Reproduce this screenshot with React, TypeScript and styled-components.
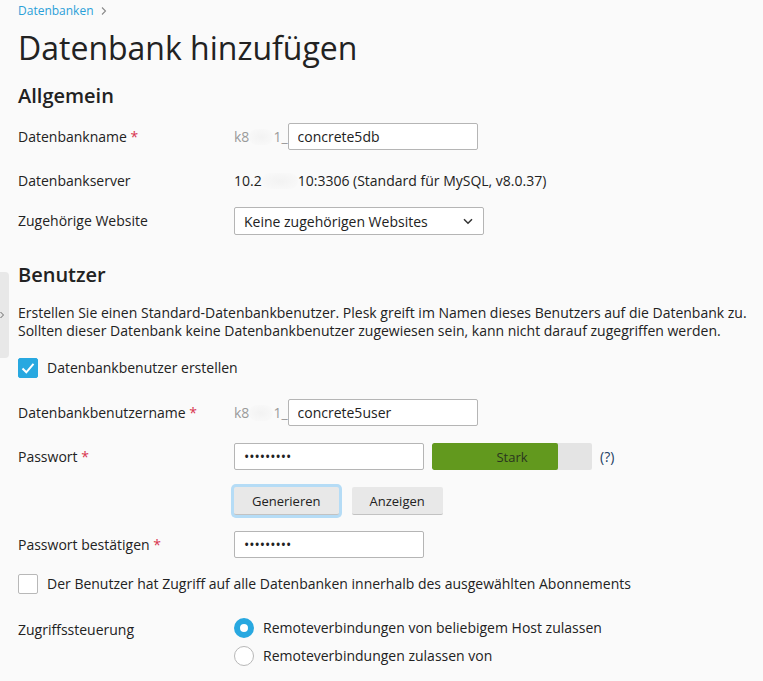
import React from 'react';
import styled, { createGlobalStyle } from 'styled-components';

const GlobalStyle = createGlobalStyle`
  html, body {
    margin: 0;
    padding: 0;
    background: #fafafa;
  }
  body {
    font-family: "Open Sans", "DejaVu Sans", sans-serif;
    font-size: 14px;
    color: #222;
  }
`;

function App() {
  return (
    <>
      <GlobalStyle />
      <SideToggle>
        <svg width="6" height="8" viewBox="0 0 6 8">
          <path d="M1.5 1l3 3-3 3" fill="none" stroke="#666" strokeWidth="1" />
        </svg>
      </SideToggle>
      <Page>
        <Breadcrumb>
          <a>Datenbanken</a>
          <svg width="8" height="10" viewBox="0 0 8 10">
            <path d="M2 1.5l3.5 3.5L2 8.5" fill="none" stroke="#8a8a8a" strokeWidth="1.1" />
          </svg>
        </Breadcrumb>
        <Title>Datenbank hinzufügen</Title>

        <Heading $mt={16}>Allgemein</Heading>

        <Row $mt={15}>
          <Label>Datenbankname <Req>*</Req></Label>
          <Field>
            <Prefix>k8<Blur $w={24} />1_</Prefix>
            <Input $w={190} defaultValue="concrete5db" />
          </Field>
        </Row>

        <Row $mt={21}>
          <Label>Datenbankserver</Label>
          <Field>
            <Value>
              10.2<Blur $w={36} />10:3306 (Standard für MySQL, v8.0.37)
            </Value>
          </Field>
        </Row>

        <Row $mt={16}>
          <Label>Zugehörige Website</Label>
          <Field>
            <Select>
              <span>Keine zugehörigen Websites</span>
              <svg width="10" height="7" viewBox="0 0 10 7">
                <path d="M1 1.2l4 4 4-4" fill="none" stroke="#333" strokeWidth="1.5" />
              </svg>
            </Select>
          </Field>
        </Row>

        <Heading $mt={28}>Benutzer</Heading>

        <Hint>
          <span>Erstellen Sie einen Standard-Datenbankbenutzer. Plesk greift im Namen dieses Benutzers auf die Datenbank zu.</span>
          <span>Sollten dieser Datenbank keine Datenbankbenutzer zugewiesen sein, kann nicht darauf zugegriffen werden.</span>
        </Hint>

        <CheckRow $mt={18}>
          <Box $checked>
            <svg width="14" height="12" viewBox="0 0 14 12">
              <path d="M1.5 6.5l3.8 3.8L12.5 1.8" fill="none" stroke="#fff" strokeWidth="2" />
            </svg>
          </Box>
          Datenbankbenutzer erstellen
        </CheckRow>

        <Row $mt={21}>
          <Label>Datenbankbenutzername <Req>*</Req></Label>
          <Field>
            <Prefix>k8<Blur $w={24} />1_</Prefix>
            <Input $w={190} defaultValue="concrete5user" />
          </Field>
        </Row>

        <Row $mt={17}>
          <Label>Passwort <Req>*</Req></Label>
          <Field>
            <Input $w={190} type="password" defaultValue="123456789" />
            <Strength>
              <StrengthFill style={{ width: '79%' }} />
              <StrengthText>Stark</StrengthText>
            </Strength>
            <HelpLink>(?)</HelpLink>
          </Field>
        </Row>

        <Row $mt={17}>
          <span />
          <Field>
            <Button $focused>Generieren</Button>
            <Button>Anzeigen</Button>
          </Field>
        </Row>

        <Row $mt={16}>
          <Label>Passwort bestätigen <Req>*</Req></Label>
          <Field>
            <Input $w={190} type="password" defaultValue="123456789" />
          </Field>
        </Row>

        <CheckRow $mt={16}>
          <Box />
          Der Benutzer hat Zugriff auf alle Datenbanken innerhalb des ausgewählten Abonnements
        </CheckRow>

        <Row $mt={24} $top>
          <Label $pad={2}>Zugriffssteuerung</Label>
          <Radios>
            <RadioRow>
              <Radio $checked />
              Remoteverbindungen von beliebigem Host zulassen
            </RadioRow>
            <RadioRow>
              <Radio />
              Remoteverbindungen zulassen von
            </RadioRow>
          </Radios>
        </Row>
      </Page>
    </>
  );
}

const Page = styled.div`
  padding: 3px 18px 20px;
`;

const SideToggle = styled.div`
  position: absolute;
  left: 0;
  top: 272px;
  width: 9px;
  height: 86px;
  background: #e8e8e8;
  border-radius: 0 4px 4px 0;
  display: flex;
  align-items: center;

  svg {
    margin-left: -1px;
  }
`;

const Breadcrumb = styled.div`
  display: flex;
  align-items: center;
  gap: 6px;
  height: 16px;
  font-size: 12px;
  line-height: 16px;

  a {
    color: #2a9fd8;
  }
`;

const Title = styled.h1`
  margin: 9px 0 0;
  font-size: 32px;
  line-height: 40px;
  font-weight: 400;
  color: #222;
`;

const Heading = styled.h2<{ $mt: number }>`
  margin: ${(p) => p.$mt}px 0 0;
  font-size: 20px;
  line-height: 24px;
  font-weight: 600;
  color: #222;
`;

const Row = styled.div<{ $mt: number; $top?: boolean }>`
  display: grid;
  grid-template-columns: 216px 1fr;
  align-items: ${(p) => (p.$top ? 'start' : 'center')};
  margin-top: ${(p) => p.$mt}px;
`;

const Label = styled.div<{ $pad?: number }>`
  line-height: 20px;
  padding-top: ${(p) => p.$pad || 0}px;
  color: #222;
`;

const Req = styled.span`
  color: #d8344f;
`;

const Field = styled.div`
  display: flex;
  align-items: center;
  min-height: 20px;
`;

const Prefix = styled.span`
  color: #9a9a9a;
  line-height: 20px;
  display: inline-flex;
  align-items: center;
`;

const Blur = styled.span<{ $w: number }>`
  display: inline-block;
  width: ${(p) => p.$w}px;
  height: 16px;
  border-radius: 8px;
  background: radial-gradient(ellipse at center, rgba(235, 235, 235, 0.5), rgba(250, 250, 250, 0));
`;

const Value = styled.span`
  line-height: 20px;
  display: inline-flex;
  align-items: center;
  white-space: nowrap;
`;

const Input = styled.input<{ $w: number }>`
  box-sizing: border-box;
  width: ${(p) => p.$w}px;
  height: 27px;
  border: 1px solid #b5b5b5;
  border-radius: 2px;
  background: #fff;
  padding: 0 9px;
  font-family: inherit;
  font-size: 14px;
  color: #222;
  outline: none;
`;

const Select = styled.div`
  box-sizing: border-box;
  width: 250px;
  height: 28px;
  border: 1px solid #b5b5b5;
  border-radius: 2px;
  background: #fff;
  padding: 0 10px 0 9px;
  display: flex;
  align-items: center;
  justify-content: space-between;
`;

const Hint = styled.p`
  margin: 17px 0 0;
  line-height: 18px;
  color: #222;
  display: flex;
  flex-direction: column;
  white-space: nowrap;
`;

const CheckRow = styled.label<{ $mt: number }>`
  display: flex;
  align-items: center;
  gap: 9px;
  margin-top: ${(p) => p.$mt}px;
  line-height: 20px;
`;

const Box = styled.span<{ $checked?: boolean }>`
  box-sizing: border-box;
  width: 20px;
  height: 20px;
  border-radius: 2px;
  display: flex;
  align-items: center;
  justify-content: center;
  background: ${(p) => (p.$checked ? '#28a8e0' : '#fff')};
  border: 1px solid ${(p) => (p.$checked ? '#28a8e0' : '#b8b8b8')};
`;

const Strength = styled.div`
  margin-left: 8px;
  width: 160px;
  height: 27px;
  border-radius: 2px;
  background: #e4e4e4;
  display: grid;
  overflow: hidden;

  & > * {
    grid-area: 1 / 1;
  }
`;

const StrengthFill = styled.div`
  background: #62991e;
  border-radius: 2px;
`;

const StrengthText = styled.div`
  display: flex;
  align-items: center;
  justify-content: center;
  font-size: 13px;
  color: #2a3520;
`;

const HelpLink = styled.span`
  margin-left: 8px;
  color: #233d62;
`;

const Button = styled.button<{ $focused?: boolean }>`
  box-sizing: border-box;
  height: 28px;
  padding: 0 18px;
  margin-right: 13px;
  border: none;
  border-bottom: 1px solid #c2c2c2;
  border-radius: 2px;
  background: #e8e8e8;
  font-family: inherit;
  font-size: 13px;
  color: #222;
  box-shadow: ${(p) => (p.$focused ? '0 0 0 3px #b5dcf6' : 'none')};
`;

const Radios = styled.div`
  display: flex;
  flex-direction: column;
  gap: 8px;
`;

const RadioRow = styled.label`
  display: flex;
  align-items: center;
  gap: 9px;
  line-height: 20px;
`;

const Radio = styled.span<{ $checked?: boolean }>`
  box-sizing: border-box;
  width: 20px;
  height: 20px;
  border-radius: 50%;
  background: #fff;
  border: ${(p) => (p.$checked ? '6px solid #28a8e0' : '1px solid #b8b8b8')};
`;

export default App;
